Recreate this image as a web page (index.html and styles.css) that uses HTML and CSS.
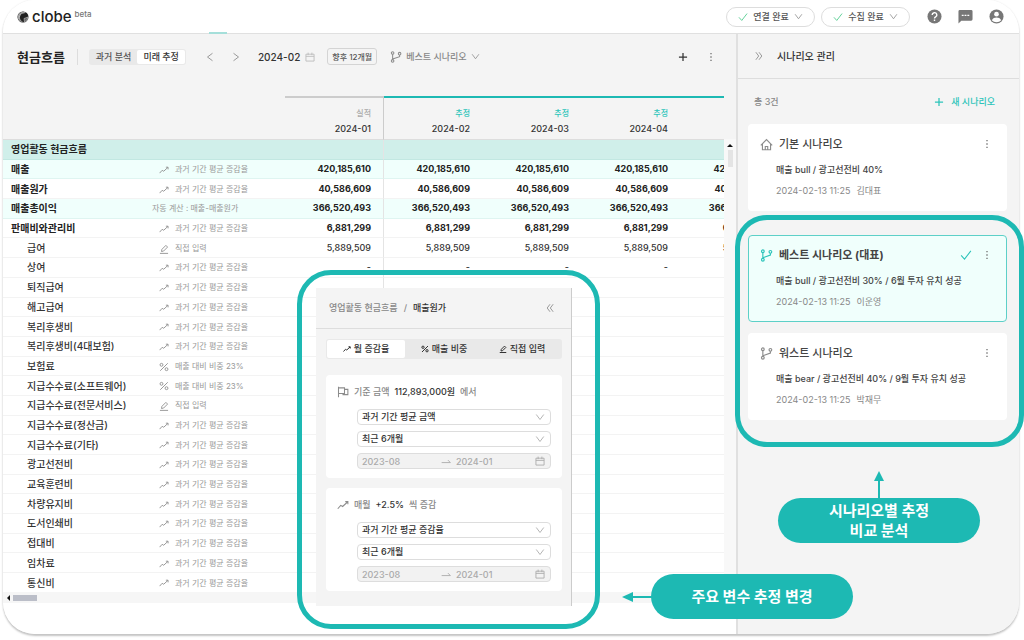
FILE: index.html
```html
<!DOCTYPE html>
<html lang="ko">
<head>
<meta charset="utf-8">
<title>clobe - 현금흐름</title>
<link rel="stylesheet" href="styles.css">
</head>
<body>
<svg class="sprite" aria-hidden="true">
  <symbol id="trend" viewBox="0 0 16 16"><path d="M1 13l4-4.500 2.500 1.500L14 4M11 3.500H14.500V7"/></symbol>
  <symbol id="edit" viewBox="0 0 16 16"><path d="M1.500 15h13M4 12l.6-3.400L11 2.200l2.700 2.700-6.400 6.400z"/></symbol>
  <symbol id="percent" viewBox="0 0 16 16"><path d="M14 2L2 14"/><circle cx="4" cy="4.500" r="2.300"/><circle cx="12" cy="11.500" r="2.300"/></symbol>
  <symbol id="branch" viewBox="0 0 16 16"><circle cx="3.500" cy="2.800" r="1.700"/><circle cx="3.500" cy="13.200" r="1.700"/><circle cx="12.800" cy="3.500" r="1.700"/><path d="M3.500 4.500v7M12.800 5.200v2.300L3.500 10.800"/></symbol>
  <symbol id="down" viewBox="0 0 16 16"><path d="M2 4l6 8 6-8"/></symbol>
  <symbol id="left" viewBox="0 0 16 16"><path d="M12 2L4 8l8 6"/></symbol>
  <symbol id="right" viewBox="0 0 16 16"><path d="M4 2l8 6-8 6"/></symbol>
  <symbol id="dleft" viewBox="0 0 16 16"><path d="M8 2L3.500 8 8 14M13 2L8.500 8l4.500 6"/></symbol>
  <symbol id="dright" viewBox="0 0 16 16"><path d="M3 2l4.500 6L3 14M8 2l4.500 6L8 14"/></symbol>
  <symbol id="check" viewBox="0 0 16 16"><path d="M1.500 8.500l4.500 5 8.500-11"/></symbol>
  <symbol id="plus" viewBox="0 0 16 16"><path d="M8 1.500v13M1.500 8h13"/></symbol>
  <symbol id="dots" viewBox="0 0 16 16"><path class="solid" d="M6.900 1.500h2.200v2.200H6.900zM6.900 6.900h2.200v2.200H6.900zM6.900 12.300h2.200v2.200H6.900z"/></symbol>
  <symbol id="calendar" viewBox="0 0 16 16"><path d="M1.500 3.500h13v11h-13zM1.500 7h13M5 1v4M11 1v4"/></symbol>
  <symbol id="home" viewBox="0 0 16 16"><path d="M1 9l7-7 7 7M3 7.500v7h10v-7M6.500 14.500v-4h3v4"/></symbol>
  <symbol id="flag" viewBox="0 0 16 16"><path d="M2 1v14M2 2.500h8v7.500H2M10 4.500h4.500v7H8V10"/></symbol>
  <symbol id="arrow" viewBox="0 0 16 16"><path d="M1 10.500h14l-4-4"/></symbol>
</svg>

<div class="shell">
  <header class="topbar">
    <a class="brand" href="#">
      <svg class="logo" viewBox="0 0 24 24" aria-hidden="true"><circle cx="12" cy="12" r="11" fill="#222"/><path d="M2 8c4-7 12-8 16-4-6-1-11 1-12 6s1 9 6 12C5 23 0 15 2 8z" fill="#999"/><path d="M5 8c3-4 7-5 10-4M4 12c1-3 2-4 4-5M4 16c0-3 1-5 2-6M14 15l8-3-2 6-5 4z" stroke="#ddd" stroke-width="1" fill="#666"/></svg>
      <span class="brand-name">clobe</span><sup class="beta">beta</sup>
    </a>
    <nav class="top-actions">
      <button class="status" type="button"><svg class="icon green"><use href="#check"/></svg>연결 완료<svg class="icon small"><use href="#down"/></svg></button>
      <button class="status" type="button"><svg class="icon green"><use href="#check"/></svg>수집 완료<svg class="icon small"><use href="#down"/></svg></button>
      <button class="round" type="button" aria-label="도움말"><svg viewBox="0 0 16 16"><circle cx="8" cy="8" r="7.500" fill="#777"/><path d="M5.500 6.300a2.500 2.400 0 1 1 3.700 2.100c-.8.500-1.200.8-1.200 1.600M8 11.300v1.500" fill="none" stroke="#fff" stroke-width="1.500"/></svg></button>
      <button class="round" type="button" aria-label="메시지"><svg viewBox="0 0 16 16"><path d="M2 1h12a1.500 1.500 0 0 1 1.500 1.500v8.500a1.500 1.500 0 0 1-1.500 1.500H3.500l-3 3v-13A1.500 1.500 0 0 1 2 1z" fill="#777"/><path d="M4 6h2v1.500H4zM7 6h2v1.500H7zM10 6h2v1.500h-2z" fill="#fff"/></svg></button>
      <button class="round" type="button" aria-label="내 계정"><svg viewBox="0 0 16 16"><circle cx="8" cy="8" r="7.500" fill="#777"/><circle cx="8" cy="5.500" r="2.500" fill="#fff"/><path d="M3 12c1-2.300 3-3 5-3s4 .7 5 3c-2.500 2.700-7.500 2.700-10 0z" fill="#fff"/></svg></button>
    </nav>
  </header>

  <div class="workspace">
    <main class="main">
      <div class="toolbar">
        <h1 class="page-title">현금흐름</h1>
        <div class="segment"><button type="button">과거 분석</button><button class="on" type="button">미래 추정</button></div>
        <div class="pager">
          <button type="button" aria-label="이전"><svg class="icon"><use href="#left"/></svg></button>
          <button type="button" aria-label="다음"><svg class="icon"><use href="#right"/></svg></button>
        </div>
        <button class="month" type="button">2024-02<svg class="icon faint"><use href="#calendar"/></svg></button>
        <button class="range" type="button">향후 12개월</button>
        <button class="scenario-pick" type="button"><svg class="icon large"><use href="#branch"/></svg>베스트 시나리오<svg class="icon small"><use href="#down"/></svg></button>
        <div class="tools">
          <button type="button" aria-label="추가"><svg class="icon dark"><use href="#plus"/></svg></button>
          <button type="button" aria-label="더보기"><svg class="icon"><use href="#dots"/></svg></button>
        </div>
      </div>
      <div class="sheet">
        <div class="viewport">
          <table class="cashflow">
            <colgroup><col class="c-name"><col class="c-method"><col class="c-val"><col class="c-val"><col class="c-val"><col class="c-val"><col class="c-val"></colgroup>
            <thead><tr><td colspan="2"></td>
              <th class="actual" scope="col"><span>실적</span>2024-01</th>
              <th scope="col"><span>추정</span>2024-02</th>
              <th scope="col"><span>추정</span>2024-03</th>
              <th scope="col"><span>추정</span>2024-04</th>
              <th scope="col"></th></tr></thead>
            <tbody>
              <tr class="section"><th scope="row">영업활동 현금흐름</th><td></td><td></td><td colspan="4"></td></tr>
              <tr class="total tint"><th scope="row">매출</th><td><svg class="icon"><use href="#trend"/></svg>과거 기간 평균 증감율</td><td>420,185,610</td><td>420,185,610</td><td>420,185,610</td><td>420,185,610</td><td>420,185,610</td></tr>
              <tr class="total"><th scope="row">매출원가</th><td><svg class="icon"><use href="#trend"/></svg>과거 기간 평균 증감율</td><td>40,586,609</td><td>40,586,609</td><td>40,586,609</td><td>40,586,609</td><td>40,586,609</td></tr>
              <tr class="total tint"><th scope="row">매출총이익</th><td class="auto">자동 계산 : 매출-매출원가</td><td>366,520,493</td><td>366,520,493</td><td>366,520,493</td><td>366,520,493</td><td>366,520,493</td></tr>
              <tr class="total"><th scope="row">판매비와관리비</th><td><svg class="icon"><use href="#trend"/></svg>과거 기간 평균 증감율</td><td>6,881,299</td><td>6,881,299</td><td>6,881,299</td><td>6,881,299</td><td>6,881,299</td></tr>
              <tr><th scope="row">급여</th><td><svg class="icon"><use href="#edit"/></svg>직접 입력</td><td>5,889,509</td><td>5,889,509</td><td>5,889,509</td><td>5,889,509</td><td>5,889,509</td></tr>
              <tr><th scope="row">상여</th><td><svg class="icon"><use href="#trend"/></svg>과거 기간 평균 증감율</td><td>-</td><td>-</td><td>-</td><td>-</td><td>-</td></tr>
              <tr><th scope="row">퇴직급여</th><td><svg class="icon"><use href="#trend"/></svg>과거 기간 평균 증감율</td><td></td><td colspan="4"></td></tr>
              <tr><th scope="row">해고급여</th><td><svg class="icon"><use href="#trend"/></svg>과거 기간 평균 증감율</td><td></td><td colspan="4"></td></tr>
              <tr><th scope="row">복리후생비</th><td><svg class="icon"><use href="#trend"/></svg>과거 기간 평균 증감율</td><td></td><td colspan="4"></td></tr>
              <tr><th scope="row">복리후생비(4대보험)</th><td><svg class="icon"><use href="#trend"/></svg>과거 기간 평균 증감율</td><td></td><td colspan="4"></td></tr>
              <tr><th scope="row">보험료</th><td><svg class="icon"><use href="#percent"/></svg>매출 대비 비중 23%</td><td></td><td colspan="4"></td></tr>
              <tr><th scope="row">지급수수료(소프트웨어)</th><td><svg class="icon"><use href="#percent"/></svg>매출 대비 비중 23%</td><td></td><td colspan="4"></td></tr>
              <tr><th scope="row">지급수수료(전문서비스)</th><td><svg class="icon"><use href="#edit"/></svg>직접 입력</td><td></td><td colspan="4"></td></tr>
              <tr><th scope="row">지급수수료(정산금)</th><td><svg class="icon"><use href="#trend"/></svg>과거 기간 평균 증감율</td><td></td><td colspan="4"></td></tr>
              <tr><th scope="row">지급수수료(기타)</th><td><svg class="icon"><use href="#trend"/></svg>과거 기간 평균 증감율</td><td></td><td colspan="4"></td></tr>
              <tr><th scope="row">광고선전비</th><td><svg class="icon"><use href="#trend"/></svg>과거 기간 평균 증감율</td><td></td><td colspan="4"></td></tr>
              <tr><th scope="row">교육훈련비</th><td><svg class="icon"><use href="#trend"/></svg>과거 기간 평균 증감율</td><td></td><td colspan="4"></td></tr>
              <tr><th scope="row">차량유지비</th><td><svg class="icon"><use href="#trend"/></svg>과거 기간 평균 증감율</td><td></td><td colspan="4"></td></tr>
              <tr><th scope="row">도서인쇄비</th><td><svg class="icon"><use href="#trend"/></svg>과거 기간 평균 증감율</td><td></td><td colspan="4"></td></tr>
              <tr><th scope="row">접대비</th><td><svg class="icon"><use href="#trend"/></svg>과거 기간 평균 증감율</td><td></td><td colspan="4"></td></tr>
              <tr><th scope="row">임차료</th><td><svg class="icon"><use href="#trend"/></svg>과거 기간 평균 증감율</td><td></td><td colspan="4"></td></tr>
              <tr><th scope="row">통신비</th><td><svg class="icon"><use href="#trend"/></svg>과거 기간 평균 증감율</td><td></td><td colspan="4"></td></tr>
            </tbody>
          </table>
        </div>
        <div class="vscroll"><i class="tri-up"></i><i class="vthumb"></i></div>
      </div>
      <div class="hscroll"><i class="tri-left"></i><i class="hthumb"></i></div>
    </main>

    <aside class="side">
      <div class="side-head"><button type="button" aria-label="접기"><svg class="icon"><use href="#dright"/></svg></button><h2>시나리오 관리</h2></div>
      <div class="side-body">
        <div class="side-bar"><span>총 3건</span><button class="new" type="button"><svg class="icon"><use href="#plus"/></svg>새 시나리오</button></div>
        <article class="card">
          <div class="card-top"><svg class="icon xl"><use href="#home"/></svg><h3>기본 시나리오</h3><button type="button" aria-label="더보기"><svg class="icon"><use href="#dots"/></svg></button></div>
          <p class="desc">매출 bull / 광고선전비 40%</p>
          <p class="meta"><span>2024-02-13 11:25</span><span>김대표</span></p>
        </article>
        <div class="compare">
          <article class="card selected">
            <div class="card-top"><svg class="icon xl teal"><use href="#branch"/></svg><h3>베스트 시나리오 (대표)</h3><svg class="icon large teal"><use href="#check"/></svg><button type="button" aria-label="더보기"><svg class="icon"><use href="#dots"/></svg></button></div>
            <p class="desc">매출 bull / 광고선전비 30% / 6월 투자 유치 성공</p>
            <p class="meta"><span>2024-02-13 11:25</span><span>이운영</span></p>
          </article>
          <article class="card">
            <div class="card-top"><svg class="icon xl"><use href="#branch"/></svg><h3>워스트 시나리오</h3><button type="button" aria-label="더보기"><svg class="icon"><use href="#dots"/></svg></button></div>
            <p class="desc">매출 bear / 광고선전비 40% / 9월 투자 유치 성공</p>
            <p class="meta"><span>2024-02-13 11:25</span><span>박재무</span></p>
          </article>
        </div>
      </div>
    </aside>
  </div>

  <section class="spotlight">
    <div class="panel">
      <div class="panel-head"><span>영업활동 현금흐름</span><span>/</span><strong>매출원가</strong><button type="button" aria-label="닫기"><svg class="icon"><use href="#dleft"/></svg></button></div>
      <div class="panel-body">
        <div class="tabs">
          <button class="on" type="button"><svg class="icon"><use href="#trend"/></svg>월 증감율</button>
          <button type="button"><svg class="icon"><use href="#percent"/></svg>매출 비중</button>
          <button type="button"><svg class="icon"><use href="#edit"/></svg>직접 입력</button>
        </div>
        <div class="box">
          <div class="box-title"><svg class="icon large"><use href="#flag"/></svg>기준 금액<strong>112,893,000원</strong>에서</div>
          <label class="field"><select aria-label="기준 금액 방식"><option>과거 기간 평균 금액</option></select><svg class="icon"><use href="#down"/></svg></label>
          <label class="field"><select aria-label="기준 금액 기간"><option>최근 6개월</option></select><svg class="icon"><use href="#down"/></svg></label>
          <div class="field dates"><input aria-label="시작 월" value="2023-08" disabled><svg class="icon"><use href="#arrow"/></svg><input aria-label="종료 월" value="2024-01" disabled><svg class="icon"><use href="#calendar"/></svg></div>
        </div>
        <div class="box">
          <div class="box-title"><svg class="icon large"><use href="#trend"/></svg>매월<strong>+2.5%</strong>씩 증감</div>
          <label class="field"><select aria-label="증감 방식"><option>과거 기간 평균 증감율</option></select><svg class="icon"><use href="#down"/></svg></label>
          <label class="field"><select aria-label="증감 기간"><option>최근 6개월</option></select><svg class="icon"><use href="#down"/></svg></label>
          <div class="field dates"><input aria-label="증감 시작 월" value="2023-08" disabled><svg class="icon"><use href="#arrow"/></svg><input aria-label="증감 종료 월" value="2024-01" disabled><svg class="icon"><use href="#calendar"/></svg></div>
        </div>
      </div>
    </div>
  </section>

  <div class="callout compare-note"><svg class="pointer-up" viewBox="0 0 10 27" aria-hidden="true"><path d="M5 0l5 10H0z"/><path d="M4 9h2v18H4z"/></svg>시나리오별 추정<br>비교 분석</div>
  <div class="callout edit-note"><svg class="pointer-left" viewBox="0 0 30 10" aria-hidden="true"><path d="M0 5l11-5v10z"/><path d="M10 4h20v2H10z"/></svg>주요 변수 추정 변경</div>
</div>
</body>
</html>
```

FILE: styles.css
```css
* { box-sizing: border-box; }
body {
  margin: 0;
  background: #fff;
  color: #333;
  font: 500 9px/12px Inter, "Noto Sans CJK KR", sans-serif;
}
h1, h2, h3, p { margin: 0; }
button {
  display: inline-flex;
  align-items: center;
  justify-content: center;
  padding: 0;
  border: 0;
  background: none;
  color: inherit;
  font: inherit;
  white-space: nowrap;
}
.sprite { position: absolute; width: 0; height: 0; }
.icon {
  flex: none;
  width: 10px;
  height: 10px;
  fill: none;
  stroke: #8c8c8c;
  stroke-width: 1.4;
}
.icon.small { width: 9px; height: 9px; }
.icon.large { width: 12px; height: 12px; }
.icon.xl { width: 13px; height: 13px; }
.icon.green { stroke: #4fcb8d; }
.icon.teal { stroke: #2cc4ba; }
.icon.faint { stroke: #bbb; }
.icon.dark { stroke: #333; stroke-width: 2; }
.solid { fill: #777; stroke: none; }

.shell {
  position: relative;
  display: flex;
  flex-direction: column;
  min-height: calc(100vh - 6px);
  margin: 0 5px 6px 3px;
  border-radius: 32px;
  box-shadow: 0 2px 2px #c4c4c4, 0 0 2px #e4e4e4;
}

/* top bar */
.topbar {
  position: relative;
  display: flex;
  align-items: center;
  justify-content: space-between;
  height: 34px;
  padding: 0 15px 0 14px;
  border-bottom: 1px solid #e0e0e0;
  background: #fff;
  border-radius: 32px 32px 0 0;
}
.topbar::after {
  content: "";
  position: absolute;
  left: 206px;
  bottom: -1px;
  width: 18px;
  height: 2px;
  background: #a5dfda;
}
.brand { display: flex; align-items: center; gap: 3px; color: #222; text-decoration: none; }
.logo { width: 12px; height: 12px; }
.brand-name { font-size: 15px; line-height: 18px; }
.beta { align-self: flex-start; font-size: 8px; line-height: 12px; color: #777; }
.top-actions { display: flex; align-items: center; gap: 6px; }
.status {
  gap: 5px;
  width: 89px;
  height: 20px;
  border: 1px solid #ddd;
  border-radius: 10px;
  color: #555;
}
.round { width: 15px; height: 15px; margin-left: 10px; }
.status + .round { margin-left: 11px; }
.round svg { width: 15px; height: 15px; }

/* workspace */
.workspace { flex: 1; display: flex; min-height: 0; }
.main {
  flex: 1;
  min-width: 0;
  background: #fff;
  border-radius: 0 0 0 32px;
}
.toolbar {
  display: flex;
  align-items: center;
  height: 62px;
  padding: 0 20px 17px 14px;
  background: #f4f4f4;
}
.page-title {
  padding-right: 12px;
  border-right: 1px solid #ddd;
  font-size: 13px;
  line-height: 16px;
  color: #222;
}
.segment {
  display: flex;
  margin-left: 11px;
  padding: 1px;
  border-radius: 3px;
  background: #e9e9e9;
}
.segment button { height: 14px; padding: 0 6px; border-radius: 2px; color: #555; }
.segment .on { background: #fff; color: #333; }
.pager { display: flex; gap: 16px; margin: 0 17px 0 19px; }
.month { gap: 5px; font-size: 10px; }
.range {
  height: 17px;
  margin-left: 12px;
  padding: 0 4px;
  border: 1px solid #d4d4d4;
  border-radius: 3px;
  font-size: 8px;
  color: #555;
}
.scenario-pick { gap: 4px; margin-left: 13px; color: #888; }
.tools { display: flex; gap: 18px; margin-left: auto; }

.sheet { display: flex; height: 496px; background: linear-gradient(#f4f4f4 43px, #fff 43px); }
.viewport { flex: 1; min-width: 0; overflow: hidden; }
.cashflow {
  width: 777px;
  height: 497px;
  table-layout: fixed;
  border-collapse: separate;
  border-spacing: 0;
}
.c-name { width: 137px; }
.c-method { width: 145px; }
.c-val { width: 99px; }
.cashflow td, .cashflow th { padding: 0 13px 0 0; text-align: right; white-space: nowrap; }
.cashflow thead tr { height: 44px; }
.cashflow thead td, .cashflow thead th { border-bottom: 1px solid #ddd; }
.cashflow thead th {
  border-top: 2px solid #1db9b3;
  padding-top: 5px;
  font-size: 9px;
  font-weight: 500;
  line-height: 15px;
}
.cashflow thead span { display: block; font-size: 8px; color: #2cc4ba; }
.cashflow thead .actual { border-top-color: #ccc; border-right: 1px solid #ccc; padding-right: 12px; }
.cashflow thead .actual span { color: #aaa; }
.cashflow tbody td, .cashflow tbody th { border-bottom: 1px solid #f3f3f3; font-size: 9px; }
.cashflow tbody th { padding: 0 0 0 24px; font-size: 10px; font-weight: 500; text-align: left; }
.cashflow tbody td:nth-child(2) { padding-left: 19px; text-align: left; font-size: 8px; font-weight: 400; color: #999; }
.cashflow tbody td.auto { padding-left: 12px; }
.cashflow tbody td:nth-child(3) { border-right: 1px solid #e4e4e4; padding-right: 12px; }
.cashflow td .icon { margin-right: 6px; vertical-align: middle; }
.cashflow .total th, .cashflow .section th { padding-left: 8px; font-weight: 700; color: #222; }
.cashflow .total td:nth-child(n+3) { font-weight: 700; color: #222; }
.cashflow .tint > * { background: #f0fffc; border-bottom-color: #dff5f1; }
.cashflow .section > * { background: #d0efea; border-bottom-color: #c2e8e2; }

.vscroll {
  display: flex;
  flex-direction: column;
  align-items: center;
  gap: 3px;
  width: 12px;
  margin-top: 43px;
  padding-top: 5px;
  background: #f8f8f8;
}
.tri-up { border: 3px solid transparent; border-top: 0; border-bottom: 3px solid #111; }
.vthumb { width: 5px; height: 17px; background: #e4e4e4; }
.hscroll { display: flex; align-items: center; gap: 3px; height: 11px; padding-left: 4px; background: #f6f6f6; }
.tri-left { border: 3px solid transparent; border-left: 0; border-right: 3px solid #111; }
.hthumb { width: 24px; height: 6px; background: #bbbec8; }

/* scenario panel */
.side {
  width: 283px;
  border-left: 2px solid #e0e0e0;
  border-radius: 0 0 32px 0;
  background: #f4f4f4;
}
.side-head { display: flex; align-items: center; gap: 13px; height: 45px; padding-left: 16px; border-bottom: 1px solid #ddd; }
.side-head h2 { font-size: 10px; font-weight: 500; }
.side-body { padding: 15px 12px 0 10px; }
.side-bar { display: flex; align-items: center; justify-content: space-between; height: 15px; margin-bottom: 15px; padding: 0 12px 0 6px; color: #888; }
.new { gap: 7px; color: #2cc4ba; }
.new .icon { stroke: #2cc4ba; stroke-width: 2; }
.card {
  padding: 12px 14px 13px 11px;
  border: 1px solid transparent;
  border-radius: 4px;
  background: #fff;
}
.card-top { display: flex; align-items: center; gap: 6px; height: 14px; }
.card-top h3 { flex: 1; font-size: 11px; font-weight: 500; color: #444; }
.card-top button { margin-left: 4px; }
.card .desc { margin-top: 13px; padding-left: 16px; color: #444; }
.card .meta { display: flex; gap: 6px; margin-top: 9px; padding-left: 16px; font-weight: 400; color: #888; }
.card.selected { border-color: #5dd0c8; background: #f0fffc; }
.selected .card-top h3 { font-weight: 700; }
.compare { position: relative; display: grid; gap: 11px; margin-top: 24px; }
.compare::after {
  content: "";
  position: absolute;
  inset: -20px -17px -27px -13px;
  border: 5px solid #1db9b3;
  border-radius: 32px;
  pointer-events: none;
}

/* variable editor */
.spotlight {
  position: absolute;
  left: 294px;
  top: 270px;
  width: 303px;
  padding: 13px 23px 18px 14px;
  border: 5px solid #1db9b3;
  border-radius: 34px;
}
.panel { border-right: 1px solid #ccc; background: #f4f4f4; }
.panel-head { display: flex; align-items: center; gap: 6px; height: 41px; padding: 0 16px 0 13px; border-bottom: 1px solid #ddd; color: #888; }
.panel-head strong { font-weight: 500; color: #333; }
.panel-head button { margin-left: auto; }
.panel-body { display: grid; grid-template-columns: minmax(0, 1fr); gap: 10px; padding: 10px 9px 15px 10px; }
.tabs { display: grid; grid-template-columns: repeat(3, minmax(0, 1fr)); margin-bottom: 6px; padding: 1px; border-radius: 3px; background: #e9e9e9; }
.tabs button { gap: 3px; height: 18px; border-radius: 2px; }
.tabs .on { background: #fff; }
.tabs .icon { width: 8px; height: 8px; stroke: #333; stroke-width: 2; }
.box { display: grid; grid-template-columns: minmax(0, 1fr); gap: 6px; padding: 9px 11px; border-radius: 4px; background: #fff; }
.box-title { display: flex; align-items: center; gap: 5px; height: 16px; margin-bottom: 3px; color: #888; }
.box-title strong { font-weight: 500; color: #333; }
.field {
  display: flex;
  align-items: center;
  height: 16px;
  margin-left: 20px;
  padding: 0 5px 0 4px;
  border: 1px solid #ddd;
  border-radius: 4px;
}
.field .icon { stroke: #aaa; }
.field select, .field input {
  flex: 1;
  min-width: 0;
  height: 14px;
  padding: 0;
  border: 0;
  outline: 0;
  background: none;
  appearance: none;
  color: #333;
  font: inherit;
}
.dates { gap: 5px; background: #f2f2f2; }
.dates input { color: #aaa; }

/* notes */
.callout {
  position: absolute;
  display: flex;
  align-items: center;
  justify-content: center;
  width: 202px;
  height: 45px;
  border-radius: 23px;
  background: #1db9b3;
  color: #fff;
  font-size: 15px;
  font-weight: 700;
  line-height: 20px;
  text-align: center;
}
.callout svg { position: absolute; fill: #1db9b3; }
.compare-note { display: block; right: 39px; top: 498px; padding-top: 3px; }
.pointer-up { left: 96px; top: -27px; width: 10px; height: 27px; }
.edit-note { right: 166px; top: 574px; }
.pointer-left { left: -29px; width: 30px; height: 10px; }
```
